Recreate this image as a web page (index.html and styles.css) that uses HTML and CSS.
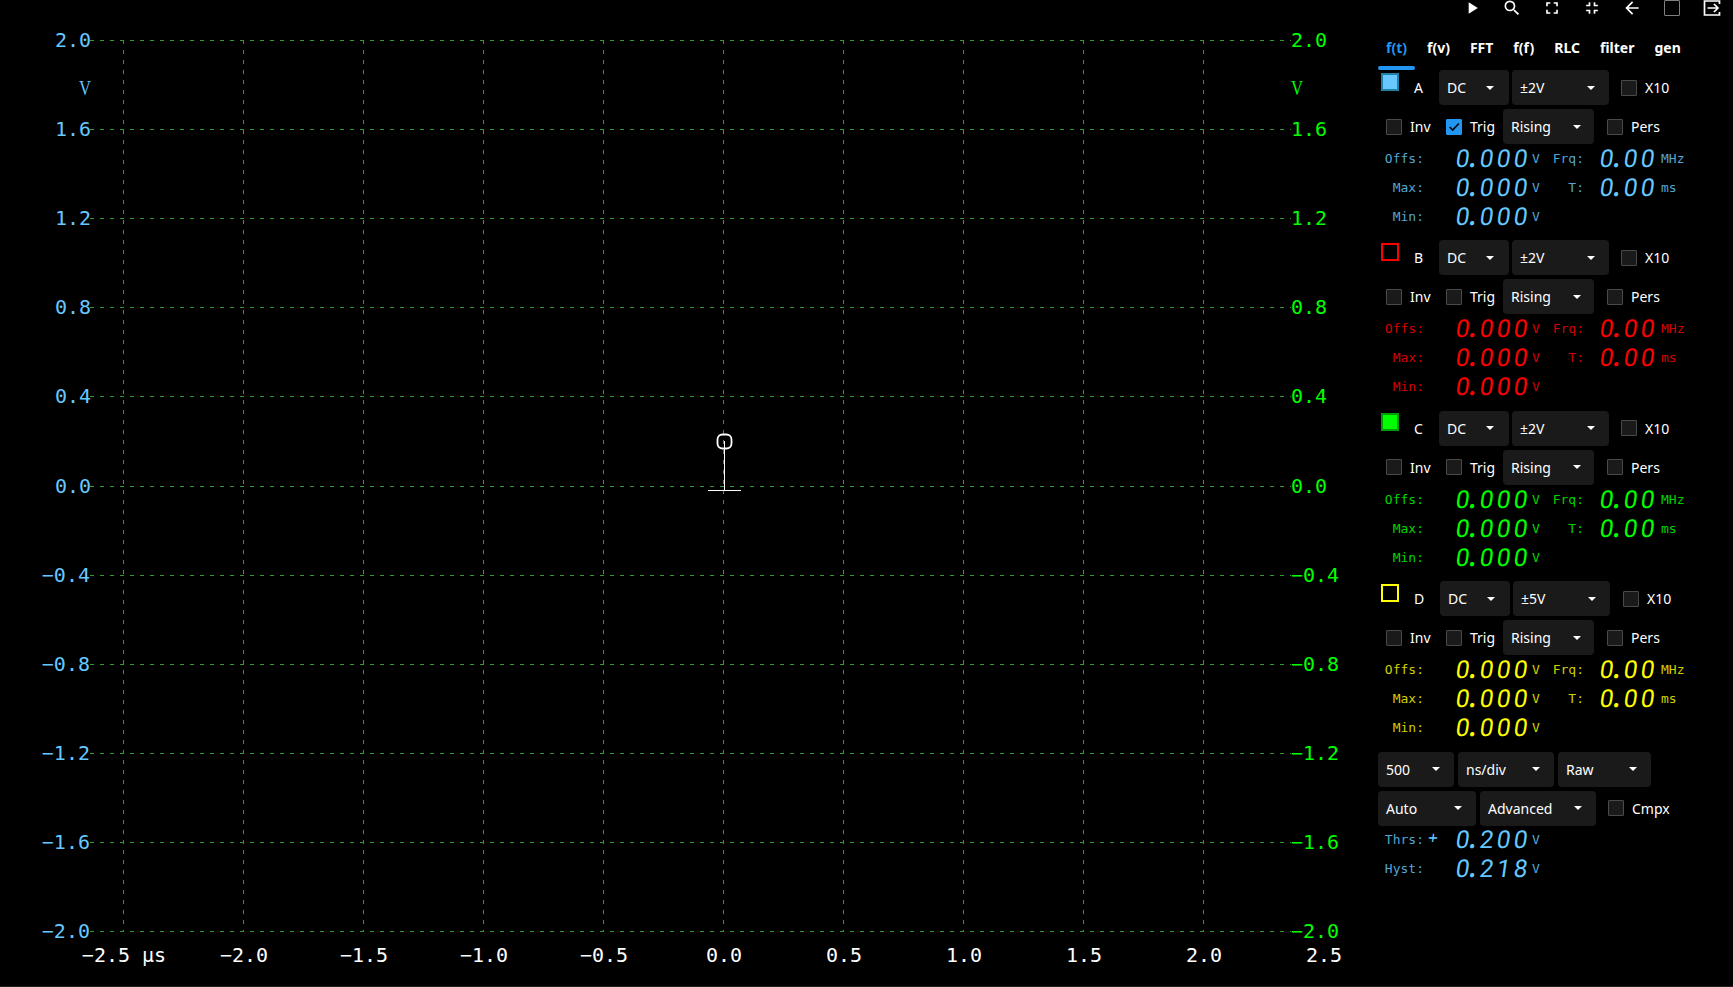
FILE: index.html
```
<!DOCTYPE html>
<html lang="en">
<head>
    <meta charset="UTF-8">
    <meta name="viewport" content="width=device-width, initial-scale=1.0">
    <title>Oscilloscope</title>
    <link rel="stylesheet" href="styles.css">
</head>
<body>
    <div class="scope">
        <svg class="plot" id="plot" width="1370" height="986"></svg>

        <div class="panel">
            <div class="toolbar">
                <svg class="icon" viewBox="0 0 24 24"><path d="M8 5v14l11-7z"/></svg>
                <svg class="icon" viewBox="0 0 24 24"><path d="M15.5 14h-.79l-.28-.27A6.471 6.471 0 0 0 16 9.5 6.5 6.5 0 1 0 9.5 16c1.61 0 3.09-.59 4.23-1.57l.27.28v.79l5 4.99L20.49 19l-4.99-5zm-6 0C7.01 14 5 11.99 5 9.5S7.01 5 9.5 5 14 7.01 14 9.5 11.99 14 9.5 14z"/></svg>
                <svg class="icon" viewBox="0 0 24 24"><path d="M7 14H5v5h5v-2H7v-3zm-2-4h2V7h3V5H5v5zm12 7h-3v2h5v-5h-2v3zM14 5v2h3v3h2V5h-5z"/></svg>
                <svg class="icon" viewBox="0 0 24 24"><path d="M5 16h3v3h2v-5H5v2zm3-8H5v2h5V5H8v3zm6 11h2v-3h3v-2h-5v5zm2-11V5h-2v5h5V8h-3z"/></svg>
                <svg class="icon" viewBox="0 0 24 24"><path d="M20 11H7.83l5.59-5.59L12 4l-8 8 8 8 1.41-1.41L7.83 13H20v-2z"/></svg>
                <span class="check check-top"></span>
                <svg class="icon icon-exit" viewBox="0 0 20 20"><path d="M17.5 6V3h-15v14h15v-3M5.5 10h10M12 6l4 4-4 4"/></svg>
            </div>

            <div class="tabs">
                <span class="tab active">f(t)</span>
                <span class="tab">f(v)</span>
                <span class="tab">FFT</span>
                <span class="tab">f(f)</span>
                <span class="tab">RLC</span>
                <span class="tab">filter</span>
                <span class="tab">gen</span>
            </div>

            <div id="channels"></div>

            <div class="row">
                <div class="select w-time">500</div>
                <div class="select w-unit">ns/div</div>
                <div class="select w-raw">Raw</div>
            </div>
            <div class="row">
                <div class="select w-auto">Auto</div>
                <div class="select w-adv">Advanced</div>
                <span class="check check-cmpx"></span><span class="label">Cmpx</span>
            </div>
            <div class="readouts trigger ch-a" id="trigger"></div>
        </div>
    </div>

    <script src="script.js"></script>
</body>
</html>
```
FILE: script.js
```
// Plot area
const LEFT = 90, RIGHT = 1291, TOP = 40.5, BOTTOM = 931.5;
const plot = document.getElementById('plot');

function line(x1, y1, x2, y2, cls) {
    return `<line class="${cls}" x1="${x1}" y1="${y1}" x2="${x2}" y2="${y2}"/>`;
}

function text(x, y, str, cls) {
    return `<text class="${cls}" x="${x}" y="${y}">${str}</text>`;
}

function fmt(v) {
    return v.toFixed(1).replace('-', '\u2212');
}

let svg = '';
for (let i = 0; i <= 10; i++) {
    const y = Math.floor(TOP + i * (BOTTOM - TOP) / 10) + 0.5;
    const value = fmt((20 - i * 4) / 10);
    svg += line(LEFT, y, RIGHT, y, 'grid');
    svg += text(i > 5 ? 90 : 91, y + 6, value, 'axis axis-left');
    svg += text(RIGHT, y + 6, value, 'axis axis-right');

    const x = 123.5 + i * 120;
    if (i < 10) {
        svg += line(x, 40, x, 932, 'grid');
    }
    svg += text(x + 0.5, 962, fmt(-2.5 + i * 0.5) + (i === 0 ? ' µs' : ''), 'axis axis-time');
}
svg += '<text class="axis axis-left axis-unit" x="91" y="95" textLength="12" lengthAdjust="spacingAndGlyphs">V</text>';
svg += '<text class="axis axis-right axis-unit" x="1291" y="95" textLength="12" lengthAdjust="spacingAndGlyphs">V</text>';

// Trigger marker
svg += '<rect class="marker" x="717.5" y="434.5" width="14" height="14" rx="5"/>';
svg += line(724.5, 441, 724.5, 490, 'marker-line') + line(708, 490.5, 741, 490.5, 'marker-line');
plot.innerHTML = svg;

// Numeric display with a fixed width per digit
function digits(str) {
    return '<span class="digits">' + [...str].map(c =>
        c === '.' ? '<i class="dot">.</i>' : `<i>${c}</i>`).join('') + '</span>';
}

function readout(name, value, unit, sign = '') {
    return `<span class="name">${name}:</span><span class="sign">${sign}</span>${digits(value)}<span class="unit">${unit}</span>`;
}

const channels = [
    { name: 'A', range: '±2V', trig: true },
    { name: 'B', range: '±2V' },
    { name: 'C', range: '±2V' },
    { name: 'D', range: '±5V' }
];

const tick = '<svg viewBox="0 0 16 16"><path d="M3 8l3.5 3.5L13.5 4"/></svg>';

document.getElementById('channels').innerHTML = channels.map(ch => `
    <div class="channel ch-${ch.name.toLowerCase()}">
        <div class="row">
            <span class="swatch"></span>
            <span class="label ch-name">${ch.name}</span>
            <div class="select w-coupling">DC</div>
            <div class="select w-range">${ch.range}</div>
            <span class="check check-x10"></span><span class="label">X10</span>
        </div>
        <div class="row">
            <span class="check check-inv"></span><span class="label inv">Inv</span>
            <span class="check ${ch.trig ? 'checked' : ''}">${ch.trig ? tick : ''}</span><span class="label trig">Trig</span>
            <div class="select w-edge">Rising</div>
            <span class="check check-pers"></span><span class="label">Pers</span>
        </div>
        <div class="readouts">
            ${readout('Offs', '0.000', 'V')}${readout('Frq', '0.00', 'MHz')}
            ${readout('Max', '0.000', 'V')}${readout('T', '0.00', 'ms')}
            ${readout('Min', '0.000', 'V')}
        </div>
    </div>`).join('');

document.getElementById('trigger').innerHTML =
    readout('Thrs', '0.200', 'V', '+') + '<span></span><span></span><span></span><span></span>' +
    readout('Hyst', '0.218', 'V');
```
FILE: styles.css
```
body {
    margin: 0;
    background-color: #000;
    color: #fff;
    font-family: "Noto Sans", sans-serif;
    font-size: 14px;
    overflow: hidden;
}

.scope {
    display: flex;
    height: 986px;
    border-bottom: 1px solid #222;
}

.plot {
    flex: none;
}

.grid {
    stroke: #339933;
    stroke-width: 1;
    stroke-dasharray: 4 6;
}

.axis {
    font-family: "DejaVu Sans Mono", monospace;
    font-size: 20px;
    white-space: pre;
}

.axis-unit {
    font-family: "Liberation Serif", serif;
    font-size: 22px;
}

.axis-left {
    fill: #66c8ff;
    text-anchor: end;
}

.axis-right {
    fill: #00ff00;
}

.axis-time {
    fill: #fff;
    text-anchor: middle;
}

.marker {
    fill: none;
    stroke: #fff;
    stroke-width: 1.8;
}

.marker-line {
    stroke: #fff;
    stroke-width: 1;
}

/* Side panel */
.panel {
    width: 355px;
    padding-left: 8px;
}

.toolbar {
    display: flex;
    gap: 20px;
    height: 18px;
    margin-left: 84px;
    align-items: flex-start;
}

.icon {
    flex: none;
    width: 20px;
    height: 20px;
    margin-top: -2px;
    fill: #fff;
}

.icon-exit {
    fill: none;
    stroke: #fff;
    stroke-width: 1.7;
}

.tabs {
    display: flex;
    gap: 4px;
    margin-top: 12px;
    height: 40px;
    font-weight: bold;
}

.tab {
    padding: 0 8px;
    height: 36px;
    line-height: 36px;
    border-bottom: 4px solid transparent;
    position: relative;
}

.tab.active {
    color: #2196f3;
}

.tab.active::after {
    content: "";
    position: absolute;
    left: 0;
    right: 0;
    bottom: -4px;
    height: 4px;
    border-radius: 2px;
    background-color: #2196f3;
}

.channel {
    height: 170.4px;
}

.row {
    display: flex;
    align-items: center;
    height: 35px;
    margin-bottom: 4px;
}

.select {
    display: flex;
    align-items: center;
    justify-content: space-between;
    box-sizing: border-box;
    height: 35px;
    padding: 0 14px 0 8px;
    margin-right: 4px;
    border-radius: 4px;
    background-color: #1a1a1a;
}

.select::after {
    content: "";
    border: 4px solid transparent;
    border-top-color: #fff;
    border-bottom: 0;
}

.w-coupling { width: 70px; margin-right: 3px; padding: 0 15px 0 8px; }
.w-range { width: 97px; }
.w-edge { width: 91px; padding-right: 13px; }
.w-time { width: 76px; }
.w-unit { width: 96px; }
.w-raw { width: 93px; }
.w-auto { width: 98px; }
.w-adv { width: 116px; }

.check {
    box-sizing: border-box;
    flex: none;
    width: 16px;
    height: 16px;
    margin-right: 8px;
    border: 1px solid #4a4a4a;
    border-radius: 1px;
    background-color: #1a1a1a;
}

.check.checked {
    border-color: #2196f3;
    background-color: #2196f3;
}

.check svg {
    display: block;
    width: 14px;
    height: 14px;
    fill: none;
    stroke: #000;
    stroke-width: 1.8;
}

.check-top {
    margin: 0 2px;
    border-color: #808080;
    background-color: #000;
}

.check-x10 { margin-left: 8px; }
.check-inv { margin-left: 8px; }
.check-pers { margin-left: 9px; }
.check-cmpx { margin-left: 8px; }

.inv { width: 36px; }
.trig { width: 33px; }

.swatch {
    box-sizing: border-box;
    width: 18px;
    height: 18px;
    margin: -12px 15px 0 3px;
    border: 2px solid;
}

.ch-name {
    width: 25px;
}

.ch-d .ch-name {
    width: 26px;
}

.ch-d .check-x10 {
    margin-left: 9px;
}

/* Channel colors */
.ch-a { --color: #66c8ff; --dim: #52a6d4; }
.ch-b { --color: #ff0000; --dim: #d40000; }
.ch-c { --color: #00ff00; --dim: #00d400; }
.ch-d { --color: #ffff00; --dim: #d0d000; }

.ch-a .swatch { background-color: #66c8ff; border-color: #2080a8; }
.ch-b .swatch { border-color: #ff0000; }
.ch-c .swatch { background-color: #00ff00; border-color: #00a000; }
.ch-d .swatch { border-color: #ffff00; }

/* Measurements */
.readouts {
    display: grid;
    grid-template-columns: 39px 32px 76px 20px 32px 16px 61px auto;
    grid-auto-rows: 29px;
    align-items: center;
    padding-left: 7px;
    margin-top: -4px;
    font-family: "DejaVu Sans Mono", monospace;
    font-size: 13px;
    color: var(--dim);
}

.readouts span {
    white-space: nowrap;
}

.name {
    justify-self: end;
}

.sign {
    font-size: 16px;
    padding-left: 4px;
    transform: skewX(-8deg) translateY(-2px);
    color: var(--color);
}

.digits {
    display: flex;
    height: 29px;
    line-height: 29px;
    font-family: Roboto, sans-serif;
    font-size: 24.5px;
    color: var(--color);
    transform: skewX(-8deg);
}

.digits i {
    width: 17px;
    font-style: normal;
}

.digits .dot {
    width: 7px;
    text-indent: -4px;
    font-family: Inter, sans-serif;
    font-weight: bold;
}

.trigger {
    margin-top: -5px;
}
```
